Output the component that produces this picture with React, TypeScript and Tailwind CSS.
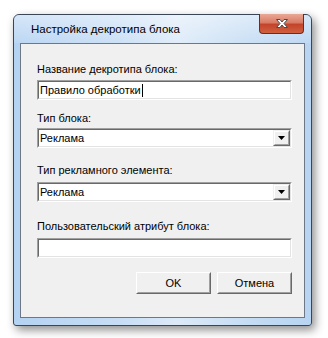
import React from "react";

function Sunken({ children, className = "" }: { children?: React.ReactNode; className?: string }) {
  return (
    <div className={"border border-t-[#a0a0a0] border-l-[#a0a0a0] border-b-white border-r-white " + className}>
      <div className="h-full border border-t-[#696969] border-l-[#696969] border-b-[#e3e3e3] border-r-[#e3e3e3] bg-white flex items-center">
        {children}
      </div>
    </div>
  );
}

function Combo({ value }: { value: string }) {
  return (
    <Sunken className="h-[20px]">
      <span className="pl-[1px] flex-1 text-[11px] text-black leading-none">{value}</span>
      <div className="h-full w-[17px] border border-t-[#f0f0f0] border-l-[#f0f0f0] border-b-[#696969] border-r-[#696969] bg-[#f0f0f0]">
        <div className="h-full w-full border border-t-white border-l-white border-b-[#a0a0a0] border-r-[#a0a0a0] flex items-center justify-center">
          <svg width="7" height="4" viewBox="0 0 7 4"><path d="M0 0H7L3.5 4Z" fill="#000" /></svg>
        </div>
      </div>
    </Sunken>
  );
}

function Btn({ label }: { label: string }) {
  return (
    <div className="w-[75px] h-[22px] border border-t-white border-l-white border-b-[#696969] border-r-[#696969] bg-[#f0f0f0]">
      <div className="h-full w-full border border-t-[#f0f0f0] border-l-[#f0f0f0] border-b-[#a0a0a0] border-r-[#a0a0a0] flex items-center justify-center text-[11px] text-black">
        {label}
      </div>
    </div>
  );
}

export default function App() {
  return (
    <div
      className="w-[328px] h-[338px] bg-white relative overflow-hidden"
      style={{ fontFamily: '"Liberation Sans", Arial, sans-serif' }}
    >
      <div className="absolute left-[13px] top-[14px] w-[299px] h-[312px] rounded-t-[6px] rounded-b-[3px] border border-[#3a4656] shadow-[3px_4px_10px_rgba(0,0,0,0.45)] bg-[linear-gradient(90deg,#b4d2f2_0%,#c6ddf5_35%,#dceaf8_55%,#c4dcf4_80%,#b7d4f2_100%)] flex flex-col">
        <div className="h-[28px] flex items-start relative rounded-t-[5px] bg-[linear-gradient(180deg,rgba(255,255,255,0.45)_0%,rgba(255,255,255,0.1)_100%)]">
          <span className="ml-[17px] mt-[7px] text-[11.5px] text-black leading-[14px]">
            Настройка декротипа блока
          </span>
          <div className="absolute right-[7px] top-[-1px] w-[45px] h-[20px] rounded-b-[4px] border border-[#6b2a22] border-t-0 bg-[linear-gradient(180deg,#eaa896_0%,#d97c66_45%,#c4442b_55%,#d0603f_100%)] flex items-center justify-center">
            <svg width="14" height="11" viewBox="0 0 14 11">
              <path d="M1.5 1.5H5L7 4L9 1.5H12.5L9 5.5L12.5 9.5H9L7 7L5 9.5H1.5L5 5.5Z" fill="#fff" stroke="#4b4b4b" strokeWidth="1" strokeLinejoin="round" />
            </svg>
          </div>
        </div>
        <div className="mx-[6px] mb-[7px] flex-1 border border-[#6c7886] bg-[#f0f0f0] flex flex-col pl-[16px] pr-[12px] pt-[19px]">
          <div className="text-[11px] leading-[13px] text-black">Название декротипа блока:</div>
          <Sunken className="mt-[4px] h-[20px]">
            <span className="pl-[1px] text-[11px] text-black leading-none flex items-center">
              Правило обработки
              <span className="inline-block w-[1px] h-[13px] bg-black ml-[1px]" />
            </span>
          </Sunken>
          <div className="mt-[12px] text-[11px] leading-[13px] text-black">Тип блока:</div>
          <div className="mt-[3px]"><Combo value="Реклама" /></div>
          <div className="mt-[16px] text-[11px] leading-[13px] text-black">Тип рекламного элемента:</div>
          <div className="mt-[5px]"><Combo value="Реклама" /></div>
          <div className="mt-[18px] text-[11px] leading-[13px] text-black">Пользовательский атрибут блока:</div>
          <Sunken className="mt-[5px] h-[20px]" />
          <div className="mt-[14px] flex justify-end gap-[6px]">
            <Btn label="OK" />
            <Btn label="Отмена" />
          </div>
        </div>
      </div>
    </div>
  );
}
